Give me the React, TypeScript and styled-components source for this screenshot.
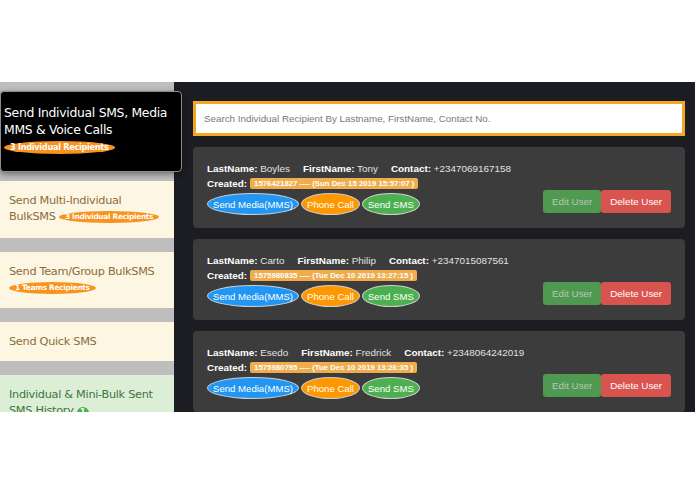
import React from "react";
import styled, { createGlobalStyle } from "styled-components";

const GlobalStyle = createGlobalStyle`
  html, body {
    margin: 0;
    padding: 0;
    background: #ffffff;
  }
  * {
    box-sizing: border-box;
  }
`;

const Page = styled.div`
  padding-top: 82px;
  font-family: "Liberation Sans", Arial, sans-serif;
`;

const Main = styled.div`
  display: flex;
  height: 330px;
  overflow: hidden;
`;

const Sidebar = styled.nav`
  width: 174px;
  flex-shrink: 0;
  background: #bebebe;
  padding-top: 9px;
  display: flex;
  flex-direction: column;
  gap: 14px;
  position: relative;
  z-index: 2;
  font-family: "Comic Sans MS", "DejaVu Sans", sans-serif;
`;

const NavItem = styled.div<{ $tone: "cream" | "green"; $height: number }>`
  flex-shrink: 0;
  height: ${({ $height }) => $height}px;
  padding: 12px 3px 0 9px;
  font-size: 11.3px;
  line-height: 16px;
  letter-spacing: -0.3px;
  background: ${({ $tone }) => ($tone === "green" ? "#dcefd6" : "#fdf6e2")};
  color: ${({ $tone }) => ($tone === "green" ? "#3c763d" : "#8a6d3b")};
`;

const ActiveItem = styled.div`
  flex-shrink: 0;
  height: 81px;
  margin-right: -8px;
  margin-bottom: -5px;
  padding: 12px 3px 0 3px;
  font-size: 12.4px;
  line-height: 17px;
  letter-spacing: -0.3px;
  background: #000000;
  color: #ffffff;
  border: 1px solid #8c8c8c;
  border-radius: 4px;
  box-shadow: 0 2px 6px rgba(0, 0, 0, 0.45);
`;

const NavBadge = styled.span<{ $big?: boolean }>`
  display: inline-block;
  background: #f7931e;
  color: #ffffff;
  font-weight: bold;
  font-size: ${({ $big }) => ($big ? 8.2 : 7.4)}px;
  line-height: ${({ $big }) => ($big ? 13 : 12)}px;
  padding: 0 6px;
  border-radius: 50%;
  letter-spacing: -0.3px;
  vertical-align: 1px;
  white-space: nowrap;
  margin-top: ${({ $big }) => ($big ? 3 : 0)}px;
`;

const CountDot = styled.span`
  display: inline-flex;
  align-items: center;
  justify-content: center;
  width: 12px;
  height: 12px;
  border-radius: 50%;
  background: #4cae4c;
  color: #ffffff;
  font-size: 8px;
  font-weight: bold;
  margin-left: 3px;
  vertical-align: -1px;
`;

const Content = styled.section`
  flex: 1;
  min-width: 0;
  background: #1b1d22;
  padding: 19px 10px 0 19px;
  display: flex;
  flex-direction: column;
  gap: 11px;
`;

const Search = styled.input`
  flex-shrink: 0;
  height: 35px;
  width: 100%;
  border: 3px solid #f5a623;
  background: #ffffff;
  padding: 0 8px;
  font-family: "Liberation Sans", Arial, sans-serif;
  font-size: 9.8px;
  color: #333;
  outline: none;
  &::placeholder {
    color: #7a7a7a;
  }
`;

const Card = styled.div`
  background: #3c3c3c;
  border-radius: 4px;
  height: 81px;
  padding: 14px 14px 0 14px;
  display: flex;
  justify-content: space-between;
  align-items: flex-start;
  flex-shrink: 0;
`;

const Info = styled.div`
  display: flex;
  flex-direction: column;
  white-space: nowrap;
`;

const InfoLine = styled.div`
  font-size: 9.9px;
  line-height: 15px;
  color: #e2e2e2;
`;

const Field = styled.span`
  margin-right: 13px;
`;

const Label = styled.b`
  color: #ffffff;
`;

const Stamp = styled.span`
  display: inline-block;
  background: #f0ad4e;
  color: #ffffff;
  font-size: 7.8px;
  font-weight: bold;
  line-height: 11px;
  padding: 0 4px;
  border-radius: 2px;
  margin-left: 3px;
  vertical-align: 1px;
`;

const Actions = styled.div`
  display: flex;
  gap: 2px;
  margin-top: 2px;
`;

const Pill = styled.button<{ $bg: string }>`
  height: 22px;
  padding: 0 5px;
  border-radius: 50%;
  border: 1px solid #cfcfcf;
  background: ${({ $bg }) => $bg};
  color: #ffffff;
  font-family: "Liberation Sans", Arial, sans-serif;
  font-size: 9.6px;
  white-space: nowrap;
`;

const UserButtons = styled.div`
  display: flex;
  margin-top: 29px;
  flex-shrink: 0;
`;

const UserButton = styled.button<{ $danger?: boolean }>`
  height: 23px;
  padding: 0 9px;
  border: none;
  border-radius: 3px;
  background: ${({ $danger }) => ($danger ? "#d9534f" : "#4f9a50")};
  color: ${({ $danger }) => ($danger ? "#ffffff" : "#b8c8b8")};
  font-family: "Liberation Sans", Arial, sans-serif;
  font-size: 9.8px;
  white-space: nowrap;
`;

const recipients = [
  {
    last: "Boyles",
    first: "Tony",
    contact: "+2347069167158",
    created: "1576421827 ---- (Sun Dec 15 2019 15:57:07 )",
  },
  {
    last: "Carto",
    first: "Philip",
    contact: "+2347015087561",
    created: "1575980835 ---- (Tue Dec 10 2019 13:27:15 )",
  },
  {
    last: "Esedo",
    first: "Fredrick",
    contact: "+2348064242019",
    created: "1575980795 ---- (Tue Dec 10 2019 13:26:35 )",
  },
];

function App() {
  return (
    <Page>
      <GlobalStyle />
      <Main>
        <Sidebar>
          <ActiveItem>
            Send Individual SMS, Media MMS &amp; Voice Calls
            <br />
            <NavBadge $big>3 Individual Recipients</NavBadge>
          </ActiveItem>
          <NavItem $tone="cream" $height={57}>
            Send Multi-Individual BulkSMS <NavBadge>3 Individual Recipients</NavBadge>
          </NavItem>
          <NavItem $tone="cream" $height={56}>
            Send Team/Group BulkSMS
            <br />
            <NavBadge>1 Teams Recipients</NavBadge>
          </NavItem>
          <NavItem $tone="cream" $height={39}>
            Send Quick SMS
          </NavItem>
          <NavItem $tone="green" $height={60}>
            Individual &amp; Mini-Bulk Sent SMS History<CountDot>1</CountDot>
          </NavItem>
        </Sidebar>

        <Content>
          <Search placeholder="Search Individual Recipient By Lastname, FirstName, Contact No." />
          {recipients.map((r) => (
            <Card key={r.contact}>
              <Info>
                <InfoLine>
                  <Field>
                    <Label>LastName:</Label> {r.last}
                  </Field>
                  <Field>
                    <Label>FirstName:</Label> {r.first}
                  </Field>
                  <Field>
                    <Label>Contact:</Label> {r.contact}
                  </Field>
                </InfoLine>
                <InfoLine>
                  <Label>Created:</Label>
                  <Stamp>{r.created}</Stamp>
                </InfoLine>
                <Actions>
                  <Pill $bg="#2196f3">Send Media(MMS)</Pill>
                  <Pill $bg="#ff9800">Phone Call</Pill>
                  <Pill $bg="#4caf50">Send SMS</Pill>
                </Actions>
              </Info>
              <UserButtons>
                <UserButton>Edit User</UserButton>
                <UserButton $danger>Delete User</UserButton>
              </UserButtons>
            </Card>
          ))}
        </Content>
      </Main>
    </Page>
  );
}

export default App;
